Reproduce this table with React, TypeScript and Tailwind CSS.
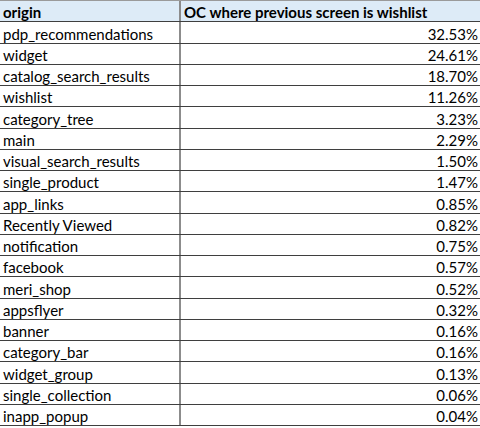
const rows: [string, string][] = [
  ["pdp_recommendations", "32.53%"],
  ["widget", "24.61%"],
  ["catalog_search_results", "18.70%"],
  ["wishlist", "11.26%"],
  ["category_tree", "3.23%"],
  ["main", "2.29%"],
  ["visual_search_results", "1.50%"],
  ["single_product", "1.47%"],
  ["app_links", "0.85%"],
  ["Recently Viewed", "0.82%"],
  ["notification", "0.75%"],
  ["facebook", "0.57%"],
  ["meri_shop", "0.52%"],
  ["appsflyer", "0.32%"],
  ["banner", "0.16%"],
  ["category_bar", "0.16%"],
  ["widget_group", "0.13%"],
  ["single_collection", "0.06%"],
  ["inapp_popup", "0.04%"],
];

export default function App() {
  return (
    <div className="w-[480px] h-[428px] bg-white overflow-hidden font-['Lato',sans-serif] text-[15px] text-black">
      <div className="border-t border-[#9a9a9a]">
        <div className="grid grid-cols-[181px_1fr] h-[21.25px] bg-[#ddebf7] border-b border-[#3f3f3f] font-bold">
          <div className="flex items-end pl-[3px] pb-[1px] leading-none border-r-2 border-[#8c8c8c]">origin</div>
          <div className="flex items-end pl-[3px] pb-[1px] leading-none">OC where previous screen is wishlist</div>
        </div>
        {rows.map(([origin, pct]) => (
          <div key={origin} className="grid grid-cols-[181px_1fr] h-[21.25px] border-b border-[#3f3f3f]">
            <div className="flex items-end pl-[3px] pb-[1px] leading-none border-r-2 border-[#8c8c8c]">{origin}</div>
            <div className="flex items-end justify-end pr-[2px] pb-[1px] leading-none">{pct}</div>
          </div>
        ))}
      </div>
    </div>
  );
}
